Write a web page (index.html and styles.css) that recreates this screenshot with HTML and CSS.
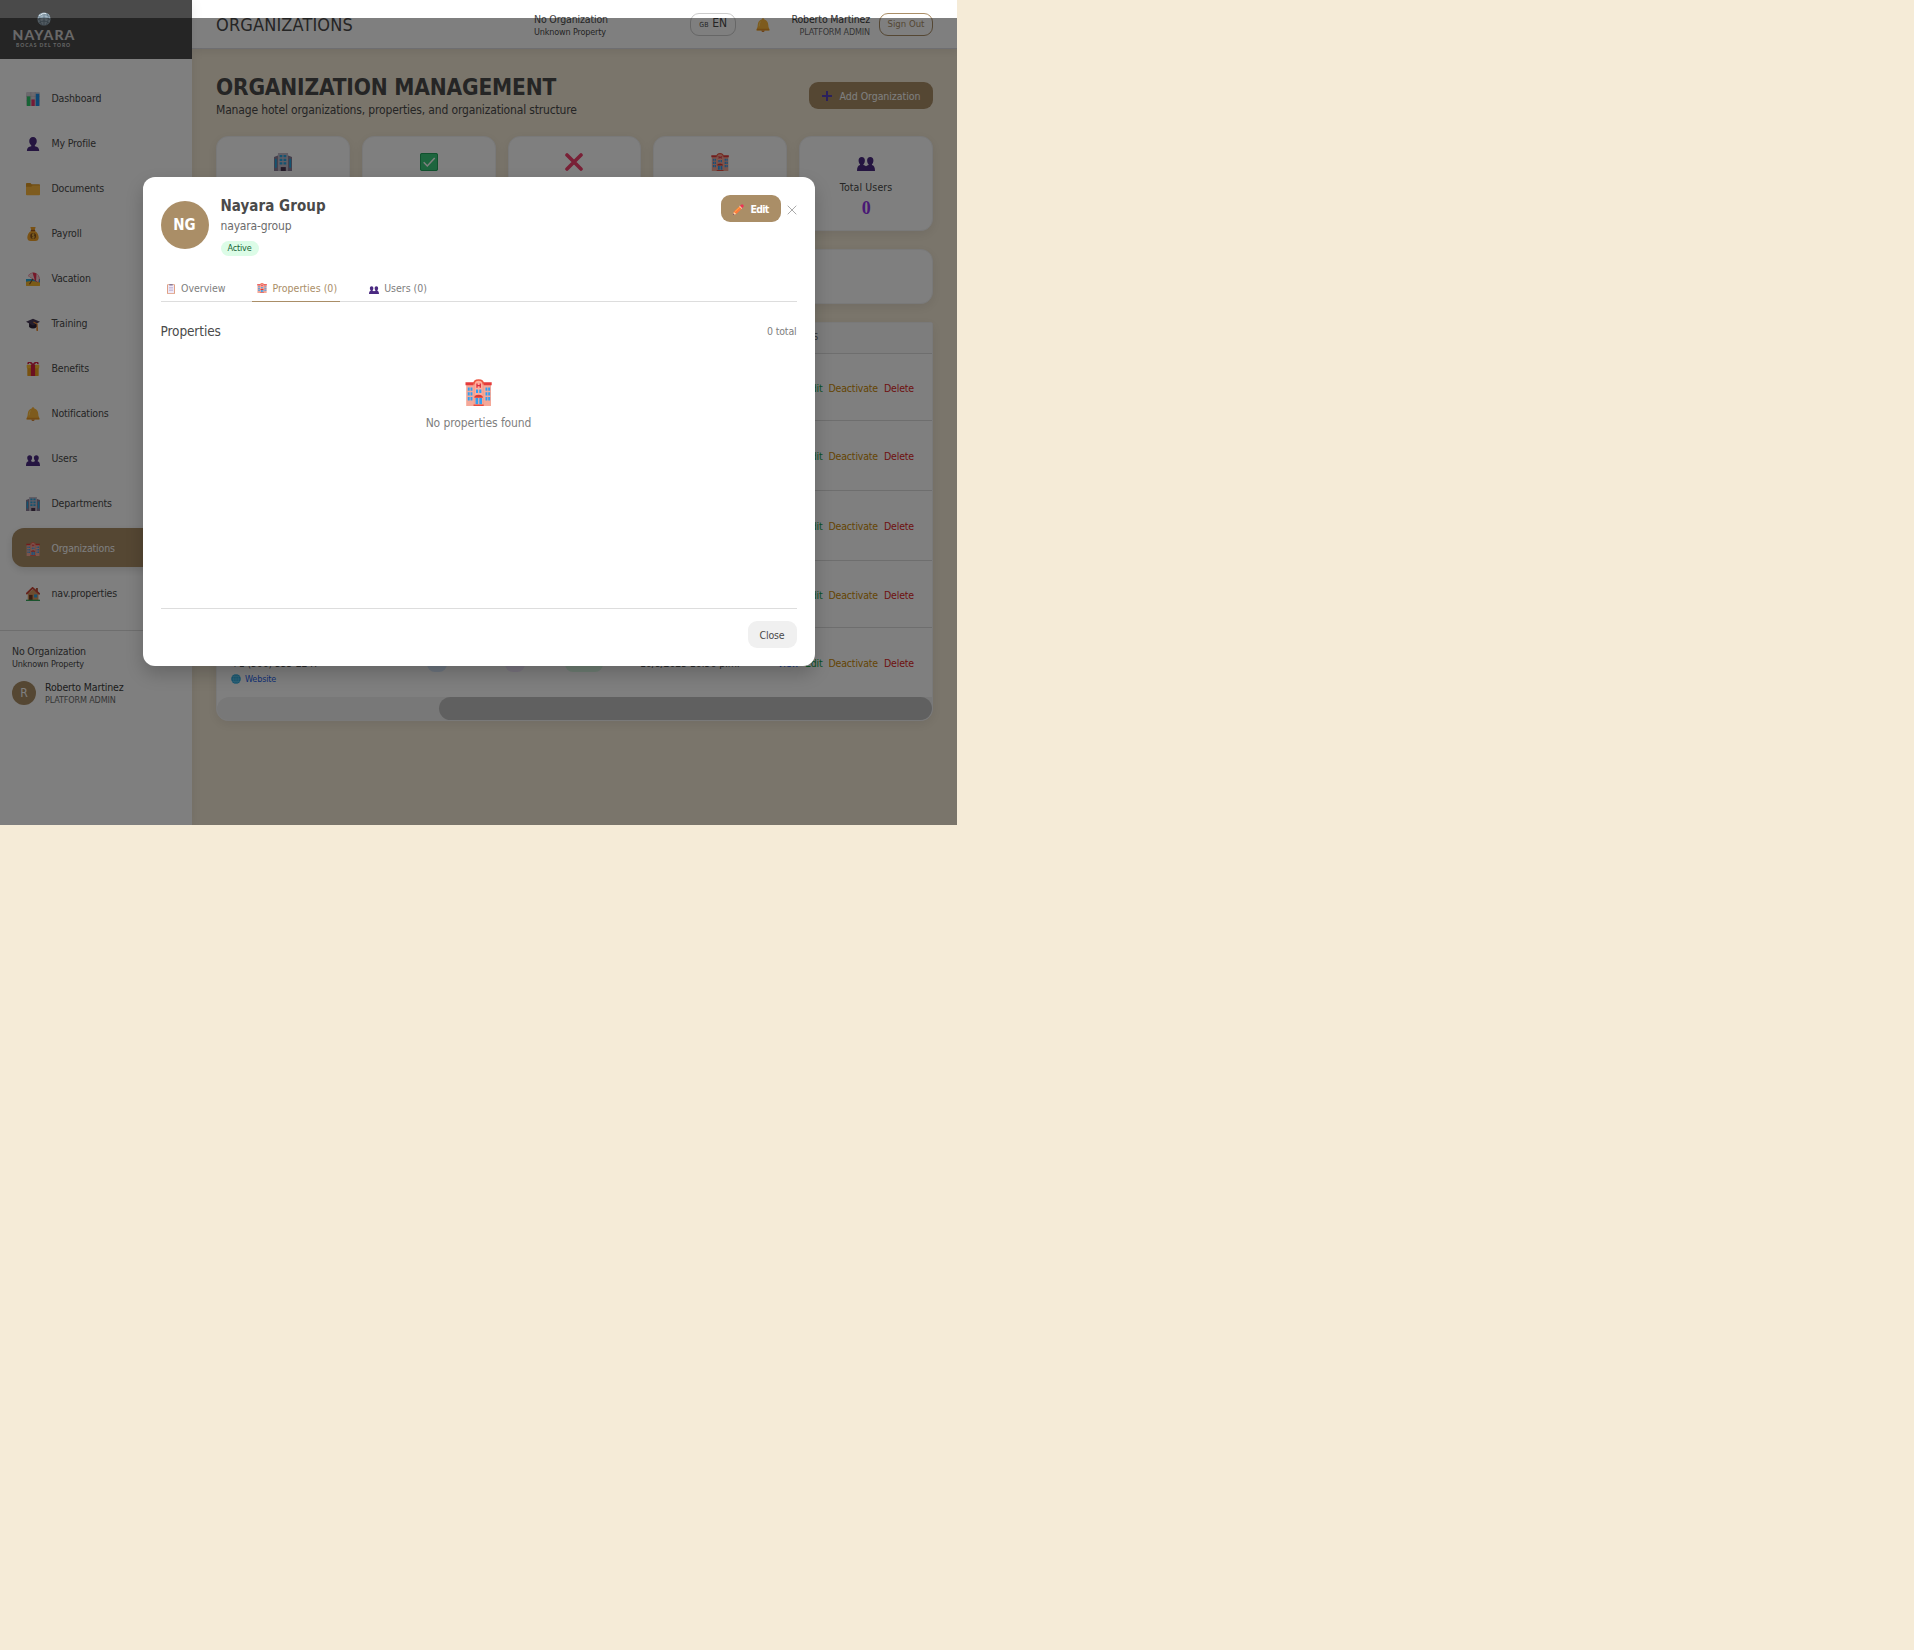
FILE: index.html
```html
<!DOCTYPE html>
<html lang="en">
<head>
<meta charset="utf-8">
<title>Organizations</title>
<link rel="stylesheet" href="styles.css">
</head>
<body>
<svg class="sprite" aria-hidden="true">
  <symbol id="chart" viewBox="0 0 16 16"><rect width="16" height="16" rx="1.5" fill="#d9d4dd"/><path d="M0 5h16M0 10h16M5.5 0v16M10.500 0v16" stroke="#b9b2c2" stroke-width=".6"/><rect x="1" y="5" width="4" height="11" fill="#2fc86a"/><rect x="6.200" y="8.500" width="3.800" height="7.500" fill="#e8356d"/><rect x="11.200" y="2" width="4" height="14" fill="#1b8fe8"/></symbol>
  <symbol id="person" viewBox="0 0 16 16"><path d="M8 0c2.800 0 4.300 2 4.300 4.500 0 2.300-1 4-2.200 4.900v1.100c3 .3 5 1.800 5 5.500H1c0-3.700 2-5.200 5-5.500V9.400C4.700 8.500 3.700 6.800 3.700 4.500 3.700 2 5.200 0 8 0z" fill="#4a2b80"/></symbol>
  <symbol id="folder" viewBox="0 0 16 16"><path d="M0 2q0-1 1-1h4L6.500 2.500H15q1 0 1 1v10.500H0z" fill="#e09a25"/><path d="M0 5.500H6L7.500 4H16v10q0 1-1 1H1q-1 0-1-1z" fill="#fcb93e"/></symbol>
  <symbol id="money" viewBox="0 0 16 16"><path d="M5 0h6L9.800 4.200C13 6 14.500 9 14.500 12q0 4-4 4h-5q-4 0-4-4C1.500 9 3 6 6.200 4.200z" fill="#f5a52a"/><path d="M5.500 4h5" stroke="#a85a18" stroke-width="1.500"/><circle cx="8.200" cy="10.200" r="3.300" fill="#8b5520"/><path d="M9.600 8.300H7.500v1.900h1.800v2H6.900M8.200 7v6.500" fill="none" stroke="#ffc545" stroke-width=".9"/></symbol>
  <symbol id="beach" viewBox="0 0 16 16"><path d="M0 8h16v5H0z" fill="#29a8d8"/><path d="M0 11q8-2 16 1v3q0 1-1 1H1q-1 0-1-1z" fill="#f6b62e"/><path d="M9 6l-5 8" stroke="#754324" stroke-width="1.200"/><path d="M2.500 4.500C5-1 12-1 15 5c1 3 0 6-1.500 7z" fill="#ed3154"/><path d="M2.500 4.500Q4.500 1 7.500.8L10 9 6 6.700zM12 1.800c3 2 3.500 6 2 9.800L11.500 10z" fill="#f4d5db"/></symbol>
  <symbol id="grad" viewBox="0 0 16 16"><path d="M3.500 6v5.500Q8 15 12.500 11.500V6z" fill="#2b2136"/><path d="M0 5.500 8 2l8 3.500L8 9.800z" fill="#493a59"/><path d="M8.500 5.700 12.800 8v7" fill="none" stroke="#f08d32" stroke-width="1.300"/><path d="M12 12h1.700v4H12z" fill="#f08d32"/></symbol>
  <symbol id="gift" viewBox="0 0 16 16"><rect x="1.500" y="6" width="13" height="10" rx="1" fill="#f2a51e"/><rect x=".8" y="3" width="14.400" height="4" rx="1" fill="#ffbf30"/><path d="M5.600 3h4.800v13H5.600z" fill="#d62043"/><path d="M8 3.500C5-1 2-.5 2.500 2.500M8 3.500c3-4.500 6-4 5.500-1" fill="none" stroke="#d62043" stroke-width="1.800"/></symbol>
  <symbol id="bell" viewBox="0 0 16 16"><path d="M6.500 1.700a1.500 1.500 0 0 1 3 0c3 1 4.300 3 4.500 6l.3 2.500L15.500 13v1.200H.5V13l1.200-2.800L2 7.700c.2-3 1.500-5 4.500-6z" fill="#fcb63a"/><path d="M1 12.300h14v1.800H1z" fill="#e79428"/><path d="M6 14.200h4Q9.500 16 8 16t-2-1.800z" fill="#d77c22"/><path d="M5 4q-1.300 2.500-1.300 5.500" fill="none" stroke="#ffdb70"/></symbol>
  <symbol id="users" viewBox="0 0 16 16"><path d="M4.200 3.600C6 3.600 7 5 7 6.600S6.300 9.500 5.700 10v.7q1.400.2 2.300 1 .9-.8 2.300-1V10C9.700 9.500 9 8.200 9 6.600s1-3 2.800-3 2.800 1.400 2.800 3-.7 2.900-1.300 3.400v.7c1.700.3 2.700 1.800 2.700 5.300H0c0-3.500 1-5 2.700-5.300V10C2.100 9.500 1.400 8.200 1.400 6.600s1-3 2.800-3z" fill="#4b2a82"/></symbol>
  <symbol id="office" viewBox="0 0 16 16"><path d="M0 3.500 4 2v14H0z" fill="#8a7f98"/><path d="M12 2l4 1.500V16h-4z" fill="#8a7f98"/><path d="M3.500 0h9v16h-9z" fill="#c3bac9"/><path d="M5 1.800h2.400v2H5zm3.500 0h2.400v2H8.500zM5 5h2.400v2H5zm3.500 0h2.400v2H8.500zM5 8.200h2.400v2H5zm3.500 0h2.400v2H8.500zM.8 5h1.600v8H.8zm12.800 0h1.600v8h-1.600z" fill="#26a6e2"/><path d="M6 12.500h4.500V16H6z" fill="#493650"/></symbol>
  <symbol id="hotel" viewBox="0 0 27 27"><path d="M1.200 5h7.500V27H1.200zM18.500 5h7.500v22h-7.500z" fill="#f5a898"/><path d="M.5 3.200h8.700v3H.5zM18 3.200h8.700v3H18z" fill="#e53b3b"/><path d="M8.500 27V4.500Q9 1 13.600 1t5.100 3.500V27z" fill="#ffad9c"/><path d="M8.800 5.500Q8.800 1 13.600 1t4.800 4.500" fill="none" stroke="#ec5742" stroke-width="1.700"/><path d="M9 5.500V27M18.200 5.500V27" stroke="#df806f" stroke-width=".6"/><path d="M12 4.400v4.300M15.300 4.400v4.300M12 6.600h3.300" stroke="#db2f40" stroke-width="1.300"/><path d="M2.800 8.500h1.900v3.300H2.800zm2.700 0h1.900v3.300H5.500zM2.800 13.300h1.900v3.300H2.800zm2.700 0h1.900v3.300H5.500zM2.800 18.100h1.900v3.300H2.800zm2.700 0h1.900v3.300H5.500zM20.500 8.500h1.900v3.300h-1.900zm2.700 0h1.900v3.300h-1.900zm-2.700 4.800h1.900v3.300h-1.900zm2.700 0h1.900v3.300h-1.900zm-2.700 4.800h1.900v3.300h-1.900zm2.700 0h1.900v3.300h-1.900zM11 10.500h2.100v3.500H11zm3.300 0h2.100V14h-2.100zM10.500 19h2.700v6.300h-2.700zm3.800 0h2.700v6.300h-2.700z" fill="#319ff0"/><path d="M9.300 18.700q0-3 4.300-3t4.300 3z" fill="#d83b36"/><path d="M8.500 25.500h10.200V27H8.500z" fill="#e84a3e"/></symbol>
  <symbol id="house" viewBox="0 0 16 16"><path d="M2 7.500 8 2.500l6.200 5.300V15H2z" fill="#d99a62"/><path d="M11.300 1h2.300v6l-2.300-2z" fill="#b35b3d"/><path d="M.3 8 7.500 1l8.200 7.300" fill="none" stroke="#c94436" stroke-width="2"/><path d="M3.500 9h4v6h-4z" fill="#713b25"/><path d="M9.200 8.500h3.600v3.500H9.200z" fill="#2fa5e5"/><path d="M0 14.500h16V16H0z" fill="#35a95b"/></symbol>
  <symbol id="check" viewBox="0 0 18 18"><rect width="18" height="18" rx="2" fill="#3bcb7c"/><rect x=".5" y=".5" width="17" height="17" rx="1.500" fill="none" stroke="#22a35d"/><path d="M3.700 9.300 7.300 13l7.400-8" fill="none" stroke="#fff" stroke-width="1.500"/></symbol>
  <symbol id="cross" viewBox="0 0 18 18"><path d="M2 2l14 14M16 2 2 16" stroke="#f2416d" stroke-width="3.600" stroke-linecap="round"/></symbol>
  <symbol id="plus" viewBox="0 0 10 10"><path d="M5 .5v9M.5 5h9" stroke="#5742bb" stroke-width="2" stroke-linecap="round"/></symbol>
  <symbol id="pencil" viewBox="0 0 11 11"><path d="M0 11 1 7.500 7 1.700 9.500 4 3.500 9.800z" fill="#ff793b"/><path d="M2 7.600 7.800 2.200" stroke="#ffae48"/><path d="M0 11 .9 7.900 3.200 9.900z" fill="#ffd9a8"/><path d="M7 1.700 8.500.4q.8-.5 1.600.3t.5 1.600L9.500 4z" fill="#ee3455"/><path d="M6.400 2.200 9 4.600" stroke="#e9d6e8" stroke-width=".9"/><path d="M0 11l.4-1.500 1.100 1z" fill="#563363"/></symbol>
  <symbol id="clip" viewBox="0 0 10 10"><rect x="1" y=".2" width="8" height="9.800" rx=".7" fill="#e0a184"/><rect x="2" y="1" width="6" height="8.200" fill="#eee8f7"/><rect x="3.300" y="0" width="3.400" height="1.500" fill="#8a7c99"/><path d="M3 3.500h4M3 5h4M3 6.500h4" stroke="#b5a5c9" stroke-width=".6"/></symbol>
  <symbol id="globe" viewBox="0 0 10 10"><circle cx="5" cy="5" r="4.800" fill="#27a8df"/><path d="M.3 5h9.400M1 2.600h8M1 7.400h8M5 .2v9.600" stroke="#77d2f3" stroke-width=".6"/><ellipse cx="5" cy="5" rx="2.300" ry="4.700" fill="none" stroke="#77d2f3" stroke-width=".6"/></symbol>
  <symbol id="shell" viewBox="0 0 14 14"><circle cx="7" cy="7" r="6.600" fill="#a2b4c1"/><path d="M1 5q6-5 12 0M.5 8q6.500-5 13 0M2 11q5-4 10 0M4 1.200q-3 6 1 12M10 1.200q3 6-1 12M7 .5v13" fill="none" stroke="#5e7482" stroke-width=".7"/><path d="M2 4q3-3 7-2.500" fill="none" stroke="#e0ebf1" stroke-width="1"/></symbol>
</svg>

<div class="app">
  <aside class="sidebar">
    <div class="brand"><div class="logo"><svg class="shell"><use href="#shell"/></svg><b>NAYARA</b><small>BOCAS DEL TORO</small></div></div>
    <nav class="nav">
      <a><svg><use href="#chart"/></svg>Dashboard</a>
      <a><svg><use href="#person"/></svg>My Profile</a>
      <a><svg><use href="#folder"/></svg>Documents</a>
      <a><svg><use href="#money"/></svg>Payroll</a>
      <a><svg><use href="#beach"/></svg>Vacation</a>
      <a><svg><use href="#grad"/></svg>Training</a>
      <a><svg><use href="#gift"/></svg>Benefits</a>
      <a><svg><use href="#bell"/></svg>Notifications</a>
      <a><svg><use href="#users"/></svg>Users</a>
      <a><svg><use href="#office"/></svg>Departments</a>
      <a class="current"><svg><use href="#hotel"/></svg>Organizations</a>
      <a><svg><use href="#house"/></svg>nav.properties</a>
    </nav>
    <div class="account">
      <div class="who"><span class="sm">No Organization</span><span class="xs">Unknown Property</span></div>
      <div class="me"><span class="initial">R</span><div class="who"><span class="sm dark">Roberto Martinez</span><span class="xs muted">PLATFORM ADMIN</span></div></div>
    </div>
  </aside>

  <div class="page">
    <header class="topbar">
      <h2>ORGANIZATIONS</h2>
      <div class="who org"><span class="sm">No Organization</span><span class="xs">Unknown Property</span></div>
      <button class="lang"><small>GB</small> EN</button>
      <svg class="bell"><use href="#bell"/></svg>
      <div class="who user"><span class="sm dark">Roberto Martinez</span><span class="xs muted">PLATFORM ADMIN</span></div>
      <button class="signout">Sign Out</button>
    </header>
    <main class="content">
      <div class="heading">
        <div><h1>ORGANIZATION MANAGEMENT</h1><p>Manage hotel organizations, properties, and organizational structure</p></div>
        <button class="primary add"><svg><use href="#plus"/></svg>Add Organization</button>
      </div>
      <section class="stats">
        <div class="card"><svg><use href="#office"/></svg></div>
        <div class="card"><svg><use href="#check"/></svg></div>
        <div class="card"><svg><use href="#cross"/></svg></div>
        <div class="card"><svg><use href="#hotel"/></svg></div>
        <div class="card"><svg><use href="#users"/></svg><span>Total Users</span><b>0</b></div>
      </section>
      <section class="card filters"></section>
      <section class="card table">
        <div class="thead"><span>ACTIONS</span></div>
        <div class="row r1"><div class="actions"><a class="view">View</a><a class="edit">Edit</a><a class="off">Deactivate</a><a class="del">Delete</a></div></div>
        <div class="row r2"><div class="actions"><a class="view">View</a><a class="edit">Edit</a><a class="off">Deactivate</a><a class="del">Delete</a></div></div>
        <div class="row r2"><div class="actions"><a class="view">View</a><a class="edit">Edit</a><a class="off">Deactivate</a><a class="del">Delete</a></div></div>
        <div class="row r1"><div class="actions"><a class="view">View</a><a class="edit">Edit</a><a class="off">Deactivate</a><a class="del">Delete</a></div></div>
        <div class="row last">
          <div class="contact"><span class="phone">+1 (506) 555-2247</span><a class="site"><svg><use href="#globe"/></svg>Website</a></div>
          <span class="count blue"></span><span class="count violet"></span><span class="pill">Active</span>
          <span class="date">10/8/2025 10:56 p.m.</span>
          <div class="actions"><a class="view">View</a><a class="edit">Edit</a><a class="off">Deactivate</a><a class="del">Delete</a></div>
        </div>
        <div class="track"><div class="thumb"></div></div>
      </section>
    </main>
  </div>

  <div class="overlay">
    <div class="modal">
      <div class="mhead">
        <span class="avatar">NG</span>
        <div class="ident"><h3>Nayara Group</h3><p>nayara-group</p><span class="pill">Active</span></div>
        <div class="tools"><button class="primary editbtn"><svg><use href="#pencil"/></svg>Edit</button><svg class="close" viewBox="0 0 10 10"><path d="M.7.7l8.600 8.600M9.300.7.7 9.300"/></svg></div>
      </div>
      <div class="tabs">
        <a><svg><use href="#clip"/></svg>Overview</a>
        <a class="on"><svg><use href="#hotel"/></svg>Properties (0)</a>
        <a><svg><use href="#users"/></svg>Users (0)</a>
      </div>
      <div class="sub"><h4>Properties</h4><span>0 total</span></div>
      <div class="empty"><svg><use href="#hotel"/></svg><p>No properties found</p></div>
      <div class="mfoot"><button class="closebtn">Close</button></div>
    </div>
  </div>
</div>
</body>
</html>
```

FILE: styles.css
```css
* { box-sizing: border-box; }
body {
  margin: 0;
  background: #f5ebd7;
  color: #4a4a4a;
  font: 10.5px/15px "DejaVu Sans Condensed", "Noto Sans", sans-serif;
  letter-spacing: -0.015em;
  white-space: nowrap;
}
h1, h2, h3, h4, p { margin: 0; }
button { font: inherit; letter-spacing: inherit; color: inherit; padding: 0; border: 0; }
svg { display: block; flex: none; }
.sprite { position: absolute; width: 0; height: 0; }

.app { position: relative; display: flex; width: 957px; height: 825px; overflow: hidden; }

/* Sidebar */
.sidebar { width: 192px; background: #fff; flex: none; box-shadow: 0 3px 12px rgba(0,0,0,.08); z-index: 1; }
.brand { height: 59px; background: #4a4a4a; padding: 12px 12px 0; }
.logo { width: 63px; display: flex; flex-direction: column; align-items: center; color: #d0d0d0; font-family: Lato, sans-serif; }
.shell { width: 14px; height: 14px; }
.logo b { font: 900 14px/15px Lato, sans-serif; letter-spacing: 1.1px; margin: 1px -1px 0 0; }
.logo small { font: 700 5px/6px Lato, sans-serif; letter-spacing: .9px; }
.nav { display: flex; flex-direction: column; gap: 6px; padding: 19px 12px 18px; border-bottom: 1px solid #ddd; }
.nav a { display: flex; align-items: center; gap: 11.5px; height: 39px; padding: 2px 14px 0; border-radius: 12px; color: #4a4a4a; }
.nav svg { width: 14px; height: 14px; }
.nav .current { background: #aa8e67; color: #fff; box-shadow: 0 3px 8px rgba(0,0,0,.12); }
.account { padding: 13px 12px; }
.who { display: flex; flex-direction: column; }
.sm { font-size: 10.5px; line-height: 15px; }
.xs { font-size: 9px; line-height: 11px; }
.dark { color: #3a3a3a; }
.muted { color: #6b6b6b; }
.me { display: flex; align-items: center; gap: 9px; margin-top: 10px; }
.initial { width: 24px; height: 24px; border-radius: 50%; background: #aa8e67; color: #fff; font-size: 12px; line-height: 25px; text-align: center; }

/* Top bar */
.page { width: 765px; }
.topbar { height: 49px; padding: 0 24px; background: #fff; border-bottom: 1px solid #dcdce2; display: flex; align-items: flex-start; box-shadow: 0 3px 8px rgba(0,0,0,.07); }
h2 { font-weight: 400; font-size: 18px; line-height: 24px; width: 318px; padding-top: 13px; letter-spacing: 0.008em; }
.org { width: 156px; padding-top: 12px; }
.lang { width: 46px; height: 23px; margin-top: 13px; background: none; border: 1px solid #ccc; border-radius: 9px; font-size: 12px; }
.lang small { font-size: 7px; letter-spacing: .04em; }
.bell { width: 14px; height: 14px; margin: 18px 0 0 20px; }
.user { margin-left: auto; align-items: flex-end; padding-top: 12px; }
.signout { width: 54px; height: 23px; margin: 13px 0 0 9px; padding-bottom: 2px; border: 1px solid #aa8e67; border-radius: 9px; background: none; color: #aa8e67; font-size: 9.500px; letter-spacing: 0; }

/* Main content */
.content { padding: 24px 24px 0; }
.heading { display: flex; justify-content: space-between; height: 63px; }
h1 { font-weight: 700; font-size: 22.5px; line-height: 28px; letter-spacing: -0.008em; }
.heading p { font-size: 12px; line-height: 18px; letter-spacing: -0.013em; }
.primary { display: flex; align-items: center; justify-content: center; height: 27px; border-radius: 9px; background: #aa8e67; color: #fff; }
.add { width: 124px; margin-top: 9px; padding-top: 1px; gap: 8px; letter-spacing: -0.005em; }
.add svg { width: 10px; height: 10px; }
.card { background: #fff; border: 1px solid #f2f2f2; border-radius: 12px; box-shadow: 0 3px 12px rgba(0,0,0,.08); }
.stats { display: grid; grid-template-columns: repeat(5, 1fr); gap: 12px; }
.stats .card { height: 95px; display: flex; flex-direction: column; align-items: center; padding-top: 16px; }
.stats svg { width: 18px; height: 18px; }
.stats span { margin-top: 9px; letter-spacing: 0.01em; }
.stats b { font: 700 18px/24px "Liberation Serif", serif; color: #9333ea; margin-top: 1px; }
.filters { height: 55px; margin: 18px 0; }
.table { height: 399px; overflow: hidden; border-top-right-radius: 2px; }
.thead { height: 31px; background: #fafafa; border-bottom: 1px solid #ddd; font-size: 9px; line-height: 29px; padding-right: 114px; text-align: right; color: #6b6b6b; }
.row { display: flex; align-items: center; justify-content: flex-end; padding: 2px 18px 0 0; border-bottom: 1px solid #ddd; }
.r1 { height: 67px; }
.r2 { height: 70px; }
.last { height: 69px; border: 0; padding-left: 14px; justify-content: flex-start; }
.actions { display: flex; gap: 6px; letter-spacing: -0.017em; }
.last .actions { margin-left: auto; }
.view { color: #2563eb; }
.edit { color: #16a34a; }
.off { color: #ca8a04; }
.del { color: #dc2626; }
.contact { width: 196px; padding-top: 15px; }
.contact span { display: block; }
.site { display: flex; gap: 4px; align-items: center; margin-top: 1px; color: #2563eb; font-size: 9px; }
.site svg { width: 10px; height: 10px; }
.count { width: 20px; height: 16px; border-radius: 8px; margin-right: 58px; }
.violet { margin-right: 40px; background: #f3e8ff; }
.blue { background: #dbeafe; }
.pill { display: block; width: 38px; height: 15px; border-radius: 8px; background: #dcfce7; color: #166534; font-size: 9px; line-height: 14px; text-align: center; }
.last .pill { height: 17px; line-height: 17px; }
.date { margin-left: 37px; }
.track { height: 24px; background: #f0f0f0; border-radius: 12px 0 0 12px; }
.thumb { width: 493px; height: 23px; margin-left: auto; border-radius: 12px; background: #c1c1c1; }

/* Modal */
.overlay { position: absolute; inset: 18px 0 0; z-index: 2; display: flex; align-items: center; justify-content: center; background: rgba(0,0,0,.5); }
.modal { width: 672px; height: 489px; padding: 18px; background: #fff; border-radius: 12px; display: flex; flex-direction: column; box-shadow: 0 8px 18px rgba(0,0,0,.2); }
.mhead { display: flex; height: 80px; }
.avatar { width: 48px; height: 48px; margin-top: 6px; border-radius: 50%; background: #aa8e67; color: #fff; font-weight: 700; font-size: 15px; line-height: 49px; text-align: center; letter-spacing: 0; }
.ident { margin-left: 12px; }
h3 { font-size: 15px; line-height: 21px; padding-top: 1px; letter-spacing: 0.003em; }
.ident p { font-size: 12px; line-height: 18px; margin: 0 0 6px; color: #6b6b6b; }
.tools { display: flex; align-items: flex-start; margin-left: auto; }
.editbtn { width: 60px; padding: 1px 0 0 1px; gap: 6px; font-weight: 600; font-size: 10.500px; letter-spacing: -0.07em; }
.editbtn svg { width: 11px; height: 11px; }
.close { width: 10px; height: 10px; margin: 10px 0 0 6px; stroke: #aaa; fill: none; }
.tabs { display: flex; gap: 24px; height: 27px; border-bottom: 1px solid #ddd; color: #808080; letter-spacing: 0; }
.tabs a { display: flex; align-items: center; gap: 5.5px; height: 27px; padding: 0 2.500px 0 5px; }
.tabs svg { width: 10px; height: 10px; }
.tabs .on { color: #aa8e67; border-bottom: 1px solid #aa8e67; letter-spacing: 0.004em; }
.sub { display: flex; justify-content: space-between; align-items: center; height: 20px; margin-top: 19px; color: #808080; }
h4 { font-weight: 400; font-size: 13.500px; color: #4a4a4a; letter-spacing: -0.008em; }
.empty { display: flex; flex-direction: column; align-items: center; padding-top: 38px; color: #808080; }
.empty svg { width: 27px; height: 27px; }
.empty p { font-size: 12px; line-height: 18px; margin-top: 8px; letter-spacing: -0.008em; }
.mfoot { margin-top: auto; padding-top: 12px; border-top: 1px solid #ddd; display: flex; justify-content: flex-end; }
.closebtn { width: 49px; height: 27px; padding-top: 1px; border-radius: 9px; background: #f0f0f0; }
```
